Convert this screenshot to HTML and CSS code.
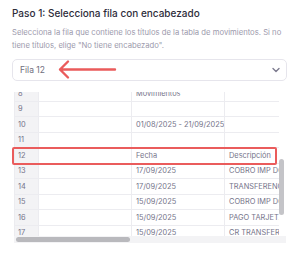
FILE: index.html
```html
<!DOCTYPE html>
<html>

<head>
  <meta charset="utf-8">
  <title>Paso 1 - encabezado</title>
  <link rel="stylesheet" href="styles.css">
</head>

<body>
  <div class="step">
    <h2 class="step-title">Paso 1: Selecciona fila con encabezado</h2>
    <p class="step-help">Selecciona la fila que contiene los títulos de la tabla de movimientos. Si no tiene títulos, elige "No tiene encabezado".</p>

    <div class="select-wrap">
      <div class="select">
        <span>Fila 12</span>
        <svg class="chevron" width="8" height="6" viewBox="0 0 8 6">
          <path d="M1 1.5 L4 4.5 L7 1.5" fill="none" stroke="#7d7b8f" stroke-width="1.4" stroke-linecap="round" stroke-linejoin="round" />
        </svg>
      </div>
      <!-- flecha de ayuda -->
      <svg class="arrow" width="62" height="22" viewBox="0 0 62 22">
        <path d="M58 10.5 H3 M11 2.5 L3 10.5 L11 18.5" fill="none" stroke="#ea5b5b" stroke-width="2.4" stroke-linecap="round" stroke-linejoin="round" />
      </svg>
    </div>

    <div class="preview">
      <div class="preview-scroll" id="preview">
        <table class="grid">
          <colgroup>
            <col class="c-num">
            <col class="c-cell">
            <col class="c-cell">
            <col class="c-cell">
            <col>
            <col>
          </colgroup>
          <thead>
            <tr><th></th><th>A</th><th>B</th><th>C</th><th>D</th><th>E</th></tr>
          </thead>
          <tbody>
            <tr><td class="num">1</td><td>Banco</td><td></td><td></td><td></td><td></td></tr>
            <tr><td class="num">2</td><td></td><td></td><td></td><td></td><td></td></tr>
            <tr><td class="num">3</td><td>Titular</td><td></td><td></td><td></td><td></td></tr>
            <tr><td class="num">4</td><td>Cuenta</td><td></td><td></td><td></td><td></td></tr>
            <tr><td class="num">5</td><td></td><td></td><td></td><td></td><td></td></tr>
            <tr><td class="num">6</td><td></td><td></td><td></td><td></td><td></td></tr>
            <tr><td class="num">7</td><td></td><td></td><td></td><td></td><td></td></tr>
            <tr><td class="num">8</td><td></td><td>Movimientos</td><td></td><td></td><td></td></tr>
            <tr><td class="num">9</td><td></td><td></td><td></td><td></td><td></td></tr>
            <tr><td class="num">10</td><td></td><td>01/08/2025 - 21/09/2025</td><td></td><td></td><td></td></tr>
            <tr><td class="num">11</td><td></td><td></td><td></td><td></td><td></td></tr>
            <tr><td class="num">12</td><td></td><td>Fecha</td><td>Descripción</td><td>Importe</td><td>Saldo</td></tr>
            <tr><td class="num">13</td><td></td><td>17/09/2025</td><td>COBRO IMP DGR</td><td>-1.250,00</td><td>84.310,22</td></tr>
            <tr><td class="num">14</td><td></td><td>17/09/2025</td><td>TRANSFERENCIA</td><td>15.000,00</td><td>85.560,22</td></tr>
            <tr><td class="num">15</td><td></td><td>15/09/2025</td><td>COBRO IMP DGR</td><td>-980,40</td><td>70.560,22</td></tr>
            <tr><td class="num">16</td><td></td><td>15/09/2025</td><td>PAGO TARJET.</td><td>-12.400,00</td><td>71.540,62</td></tr>
            <tr><td class="num">17</td><td></td><td>15/09/2025</td><td>CR TRANSFERENCIA</td><td>8.200,00</td><td>83.940,62</td></tr>
            <tr><td class="num">18</td><td></td><td>12/09/2025</td><td>DEBITO AUTOMATICO</td><td>-3.150,00</td><td>75.740,62</td></tr>
            <tr><td class="num">19</td><td></td><td>11/09/2025</td><td>TRANSFERENCIA</td><td>20.000,00</td><td>78.890,62</td></tr>
            <tr><td class="num">20</td><td></td><td>10/09/2025</td><td>COBRO IMP DGR</td><td>-640,00</td><td>58.890,62</td></tr>
          </tbody>
        </table>
      </div>
      <div class="vbar"><div class="thumb"></div></div>
      <div class="hbar"><div class="thumb"></div></div>
      <div class="mark"></div>
    </div>
  </div>

  <script type="text/javascript">
    // dejar visible la fila elegida
    var preview = document.getElementById('preview')
    preview.scrollTop = 173
    preview.scrollLeft = 0
  </script>
</body>

</html>
```

FILE: styles.css
```css
* {
  margin: 0;
  padding: 0;
  box-sizing: border-box;
}

body {
  background: #fff;
  font-family: Inter, "Noto Sans", sans-serif;
  color: #2d2c3a;
}

.step {
  padding: 6px 13px 0 12px;
}

.step-title {
  font-size: 10px;
  font-weight: 500;
  line-height: 14px;
  color: #2d2c3a;
}

.step-help {
  margin-top: 7px;
  font-size: 7.7px;
  line-height: 12.5px;
  color: #9c9aac;
}

.select-wrap {
  position: relative;
  margin-top: 7px;
}

.select {
  display: flex;
  align-items: center;
  justify-content: space-between;
  height: 22px;
  padding: 0 6px 0 7px;
  border: 1px solid #e6e5ec;
  border-radius: 5px;
  font-size: 8.5px;
  color: #6f6e7c;
}

.arrow {
  position: absolute;
  left: 45px;
  top: 0;
}

.preview {
  position: relative;
  display: grid;
  grid-template-columns: 1fr 7px;
  grid-template-rows: 144px 7px;
  margin: 11px 1px 0 2px;
}

.preview-scroll {
  overflow: hidden;
  background: #fff;
}

.vbar {
  padding-top: 67px;
  background: #fff;
}

.vbar .thumb {
  width: 5px;
  height: 56px;
  border-radius: 3px;
  background: #c4c4c8;
}

.hbar {
  grid-column: 1 / 3;
  padding: 1px 2px;
  background: #f3f3f5;
}

.hbar .thumb {
  width: 114px;
  height: 5px;
  border-radius: 3px;
  background: #b9b9bd;
}

.grid {
  width: 616px;
  border-collapse: collapse;
  table-layout: fixed;
  font-size: 7.4px;
  color: #75748a;
}

.grid .c-num {
  width: 24px;
}

.grid .c-cell {
  width: 93px;
}

.grid th {
  height: 57.5px;
  font-weight: 500;
  color: #9c9aac;
  border: 1px solid #ececf0;
}

.grid td {
  height: 15.5px;
  padding: 0 2px 0 4px;
  border: 1px solid #ececf0;
  white-space: nowrap;
  overflow: hidden;
}

.grid td.num {
  padding-left: 3px;
  background: #f3f3f5;
}

.mark {
  position: absolute;
  left: -2px;
  top: 55px;
  width: 265px;
  height: 18px;
  border: 2px solid #ea5c5c;
  border-radius: 2px;
}
```
